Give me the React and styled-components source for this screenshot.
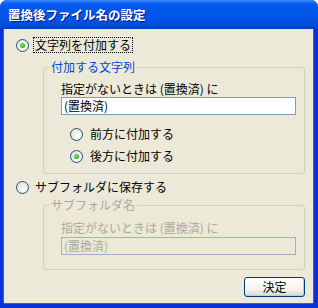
import React from "react";
import styled, { createGlobalStyle, css } from "styled-components";

const GlobalStyle = createGlobalStyle`
  html, body {
    margin: 0;
    padding: 0;
    background: #ffffff;
  }
  body {
    font-family: "Noto Sans CJK JP", "Noto Sans", sans-serif;
    font-size: 12px;
  }
`;

const COLORS = {
  face: "#ECE9D8",
  text: "#000000",
  disabled: "#ACA899",
  groupLine: "#D0D0BF",
  legend: "#0046D5",
  inputLine: "#7F9DB9",
};

const App = () => {
  return (
    <>
      <GlobalStyle />
      <Window>
        <TitleBar>
          <Title>置換後ファイル名の設定</Title>
        </TitleBar>
        <Body>
          <RadioRow>
            <Radio checked />
            <Label focused>文字列を付加する</Label>
          </RadioRow>

          <Group>
            <Legend>付加する文字列</Legend>
            <GroupInner>
              <FieldLabel>指定がないときは (置換済) に</FieldLabel>
              <TextBox>(置換済)</TextBox>
              <SubOptions>
                <SubRow>
                  <Radio />
                  <Label>前方に付加する</Label>
                </SubRow>
                <SubRow>
                  <Radio checked />
                  <Label>後方に付加する</Label>
                </SubRow>
              </SubOptions>
            </GroupInner>
          </Group>

          <RadioRow second>
            <Radio />
            <Label>サブフォルダに保存する</Label>
          </RadioRow>

          <Group second disabled>
            <Legend disabled>サブフォルダ名</Legend>
            <GroupInner second>
              <FieldLabel disabled>指定がないときは (置換済) に</FieldLabel>
              <TextBox disabled>(置換済)</TextBox>
            </GroupInner>
          </Group>

          <Footer>
            <Button>決定</Button>
          </Footer>
        </Body>
      </Window>
    </>
  );
};

const Window = styled.div`
  width: 318px;
  height: 308px;
  display: flex;
  flex-direction: column;
  border-radius: 7px 7px 0 0;
  overflow: hidden;
  background: #0831d9;
`;

const TitleBar = styled.div`
  height: 29px;
  flex: none;
  display: flex;
  align-items: center;
  padding-left: 8px;
  box-sizing: border-box;
  background: linear-gradient(
    to bottom,
    #3d8bf7 0px,
    #0f63f5 3px,
    #0058ee 6px,
    #0055ea 16px,
    #004fe0 24px,
    #0046d4 27px,
    #003dc6 29px
  );
`;

const Title = styled.div`
  color: #ffffff;
  font-weight: bold;
  font-size: 12.5px;
  line-height: 14px;
  text-shadow: 1px 1px 0 #0a1883;
  margin-top: 1px;
`;

const Body = styled.div`
  flex: 1;
  background: ${COLORS.face};
  margin: 0 5px 5px 4px;
  padding: 8px 8px 0 12px;
  display: flex;
  flex-direction: column;
  box-shadow: -1px 0 0 #166aee, 1px 0 0 #166aee, 0 1px 0 #166aee;
`;

const RadioRow = styled.div`
  display: flex;
  align-items: center;
  height: 16px;
  gap: 2px;
  ${(p) =>
    p.second &&
    css`
      margin-top: 5px;
    `}
`;

const Radio = styled.span`
  width: 13px;
  height: 13px;
  flex: none;
  box-sizing: border-box;
  border-radius: 50%;
  border: 1px solid #1c5180;
  background: radial-gradient(circle at 65% 65%, #ffffff 0%, #f0efe9 40%, #dcd9cd 100%);
  display: flex;
  align-items: center;
  justify-content: center;
  margin-right: 2px;
  &::after {
    content: "";
    width: 5px;
    height: 5px;
    border-radius: 50%;
    background: radial-gradient(circle at 40% 40%, #7ef07a 0%, #2fb82b 60%, #1a8f17 100%);
    display: ${(p) => (p.checked ? "block" : "none")};
  }
`;

const Label = styled.span`
  line-height: 14px;
  padding: 0 1px;
  color: ${COLORS.text};
  border: 1px dotted ${(p) => (p.focused ? "#000" : "transparent")};
`;

const Group = styled.fieldset`
  margin: 7px 0 0 27px;
  padding: 0;
  min-width: 0;
  border: 1px solid ${COLORS.groupLine};
  border-radius: 3px;
  ${(p) =>
    p.second &&
    css`
      margin-top: 3px;
    `}
`;

const Legend = styled.legend`
  margin-left: 5px;
  padding: 0 2px;
  line-height: 14px;
  color: ${(p) => (p.disabled ? COLORS.disabled : COLORS.legend)};
`;

const GroupInner = styled.div`
  padding: 8px 8px 6px 17px;
  display: flex;
  flex-direction: column;
  ${(p) =>
    p.second &&
    css`
      padding-top: 9px;
      padding-bottom: 14px;
    `}
`;

const FieldLabel = styled.div`
  line-height: 14px;
  color: ${(p) => (p.disabled ? COLORS.disabled : COLORS.text)};
`;

const TextBox = styled.div`
  margin-top: ${(p) => (p.disabled ? "2px" : "1px")};
  height: 18px;
  box-sizing: border-box;
  border: 1px solid ${(p) => (p.disabled ? "#9fb1c6" : COLORS.inputLine)};
  background: ${(p) => (p.disabled ? COLORS.face : "#ffffff")};
  color: ${(p) => (p.disabled ? COLORS.disabled : COLORS.text)};
  padding: 0 2px;
  line-height: 16px;
`;

const SubOptions = styled.div`
  margin-top: 8px;
  padding-left: 9px;
  display: flex;
  flex-direction: column;
`;

const SubRow = styled.div`
  display: flex;
  align-items: center;
  height: 22px;
  gap: 3px;
`;

const Footer = styled.div`
  display: flex;
  justify-content: flex-end;
  margin-top: 7px;
`;

const Button = styled.button`
  width: 61px;
  height: 20px;
  padding: 0;
  font-family: inherit;
  font-size: 12px;
  line-height: 16px;
  color: #000;
  border: 1px solid #003c74;
  border-radius: 3px;
  background: linear-gradient(to bottom, #ffffff 0%, #f4f3ee 60%, #e3e0d6 90%, #d6d0c5 100%);
  box-shadow: inset -1px -1px 0 #cdc9bb;
`;

export default App;
